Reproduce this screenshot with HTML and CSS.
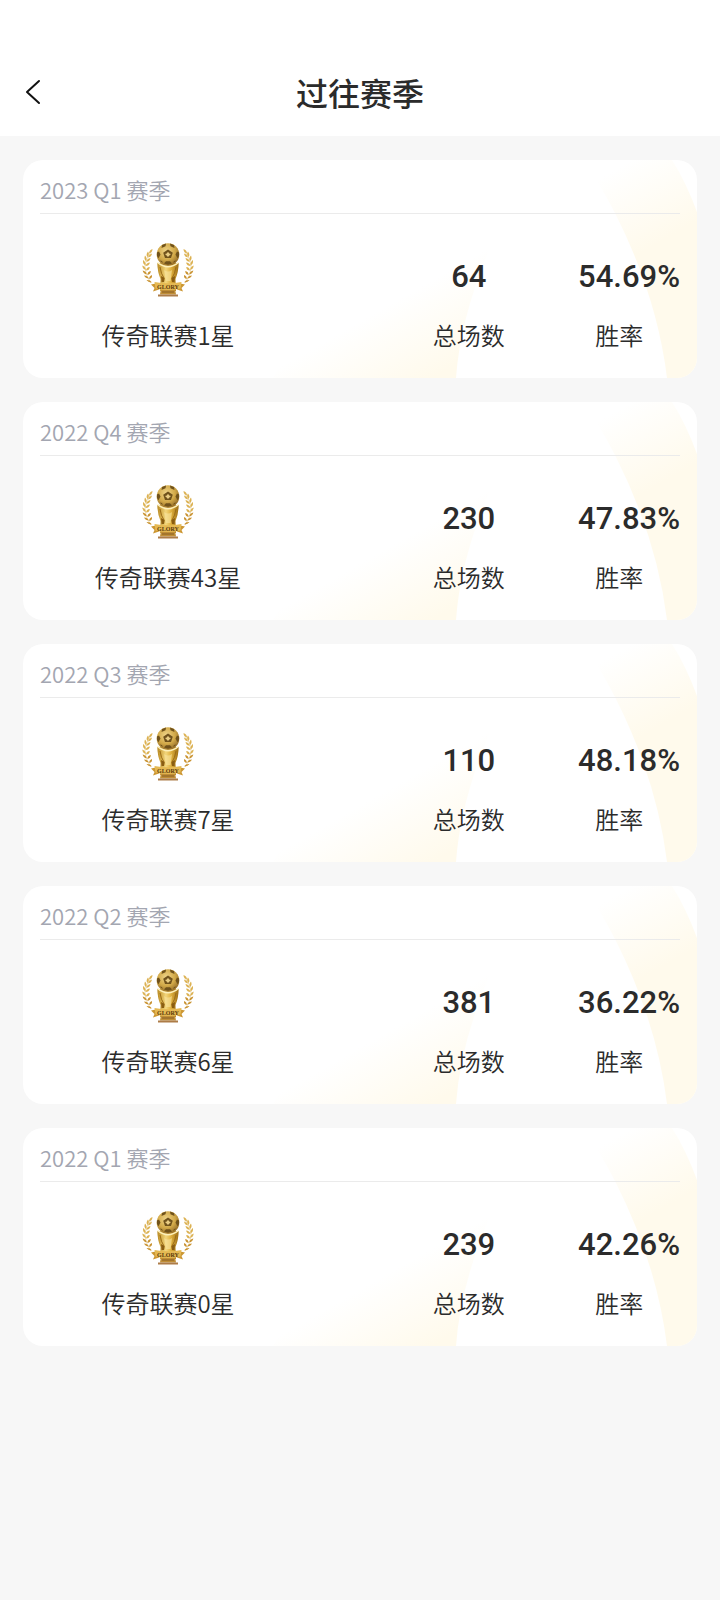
FILE: index.html
```html
<!DOCTYPE html>
<html lang="zh-CN">
<head>
    <meta charset="UTF-8">
    <meta name="viewport" content="width=device-width, initial-scale=1.0">
    <title>过往赛季</title>
    <link rel="stylesheet" href="styles.css">
</head>
<body>

    <!-- Shared drawings -->
    <svg class="defs" aria-hidden="true">
        <defs>
            <linearGradient id="gold" x1="0" y1="0" x2="1" y2="0">
                <stop offset="0" stop-color="#b98a22"/>
                <stop offset="0.4" stop-color="#f3d67c"/>
                <stop offset="0.65" stop-color="#dfb03e"/>
                <stop offset="1" stop-color="#9c6d14"/>
            </linearGradient>
            <radialGradient id="ballGold" cx="0.42" cy="0.35" r="0.65">
                <stop offset="0" stop-color="#efd488"/>
                <stop offset="0.6" stop-color="#d2a948"/>
                <stop offset="1" stop-color="#98702a"/>
            </radialGradient>
            <linearGradient id="fadeLeft" gradientUnits="userSpaceOnUse" x1="364" y1="146" x2="406" y2="220">
                <stop offset="0" stop-color="#fffaec" stop-opacity="0"/>
                <stop offset="1" stop-color="#fffaec"/>
            </linearGradient>
            <linearGradient id="fadeRight" gradientUnits="userSpaceOnUse" x1="602" y1="4" x2="644" y2="78">
                <stop offset="0" stop-color="#fffaec" stop-opacity="0"/>
                <stop offset="1" stop-color="#fffaec"/>
            </linearGradient>

            <symbol id="waves" viewBox="0 0 674 218" preserveAspectRatio="none">
                <path fill="url(#fadeLeft)" d="M250 218 L330 90 L466 90 Q437 160 433 218 Z"/>
                <path fill="url(#fadeRight)" d="M560 0 H649 Q663 22 674 52 V218 H644 Q634 136 592 53 Q576 22 560 0 Z"/>
            </symbol>

            <g id="laurel" fill="#dcb253">
                <path d="M9 9 Q-3 23 8.500 39.500" fill="none" stroke="#e3c685" stroke-width="0.6"/>
                <path d="M10.500 6 Q7 7 7 10.500 Q10.500 9.500 10.500 6Z"/>
                <path d="M6 8.500 Q3.500 11.500 5.500 14 Q8 11 6 8.500Z"/>
                <path d="M10 10.500 Q6.500 11.500 6 14.500 Q9.500 14 10 10.500Z"/>
                <path d="M3 12.500 Q1.500 16 4 18 Q5.500 15 3 12.500Z"/>
                <path d="M8.500 15 Q5 15.500 4.200 18.800 Q8 18.500 8.500 15Z"/>
                <path d="M1 17 Q.5 21 3.500 22.500 Q4 19 1 17Z"/>
                <path d="M8 19.500 Q4.500 19.500 3.500 23 Q7 23 8 19.500Z"/>
                <path d="M.3 22.500 Q.5 26 3.800 27 Q3.600 23.500 .3 22.500Z"/>
                <path d="M7.800 24 Q4.500 24 4 27.500 Q7.500 27.500 7.800 24Z"/>
                <path d="M.6 27.500 Q1.500 31 4.800 31.300 Q4 28 .6 27.500Z" fill="#c99332"/>
                <path d="M8.800 28 Q5.500 28.500 5.300 32 Q8.800 31.500 8.800 28Z" fill="#c99332"/>
                <path d="M2 32.500 Q3.500 35.500 6.800 35.500 Q5.500 32.500 2 32.500Z" fill="#c99332"/>
                <path d="M10 32 Q7 33 7.200 36 Q10.500 35.500 10 32Z" fill="#c99332"/>
                <path d="M4.500 37 Q6.500 39.800 9.800 39.300 Q8 36.500 4.500 37Z" fill="#c99332"/>
            </g>

            <symbol id="trophy" viewBox="0 0 52 54">
                <use href="#laurel"/>
                <use href="#laurel" transform="translate(52 0) scale(-1 1)"/>
                <!-- cup -->
                <path fill="url(#gold)" d="M15.300 20 Q15.500 29 18.500 36 L18 48 H34 L33.500 36 Q36.500 29 36.700 20 Z"/>
                <path fill="none" stroke="#9a6b17" stroke-width="1" d="M18 24 Q19 31 22 35 L21.500 39 M34 24 Q33 31 30 35 L30.500 39"/>
                <path fill="#8a5d12" d="M19 33 L22.500 35 L22 39 H19.500 Z M33 33 L29.500 35 L30 39 H32.500 Z"/>
                <path fill="#f8e4a0" d="M22 27 Q26 30 30 27 L28.500 38 H24 Z" opacity="0.6"/>
                <!-- ball -->
                <circle cx="26" cy="11.500" r="11.300" fill="url(#ballGold)"/>
                <g fill="#70521b">
                    <path d="M26 6.500 L30.800 9.800 L29 15 H23 L21.200 9.800 Z"/>
                    <path d="M20 2 L24 .5 L23.500 3.200 L19.500 5 Z"/>
                    <path d="M32 2 L28 .5 L28.500 3.200 L32.500 5 Z"/>
                    <path d="M14.900 9.500 L17 8.500 L18.500 11.500 L16.500 15.200 L15 13 Z"/>
                    <path d="M37.100 9.500 L35 8.500 L33.500 11.500 L35.500 15.200 L37 13 Z"/>
                    <path d="M22 20.500 L24 18.300 H28 L30 20.500 L26 21.800 Z"/>
                    <path d="M17.500 17.500 L20 18 L20.800 20 Z M34.500 17.500 L32 18 L31.200 20 Z"/>
                </g>
                <path fill="#e9cd84" d="M26 8.800 L27.200 10.600 L29 11 L27.400 12.400 L26 14 L24.600 12.400 L23 11 L24.800 10.600 Z"/>
                <path fill="none" stroke="#fdf0bb" stroke-width="1.600" d="M15.500 19.500 Q26 28 36.500 19.500"/>
                <!-- base -->
                <path fill="#c08e36" d="M19 46 H33 L34 51.500 H18 Z"/>
                <path stroke="#865c25" stroke-width="1" d="M20 49 H32"/>
                <path fill="#ad7c48" d="M16 51.500 H36 V53.500 H16 Z"/>
                <!-- ribbon -->
                <path fill="#cc9733" d="M9 41.500 L16 40 L17 46.500 L11 48.500 L12.500 45 Z M43 41.500 L36 40 L35 46.500 L41 48.500 L39.500 45 Z"/>
                <path fill="#e5b953" d="M12.500 39 Q26 41.500 39.500 39 L38.500 45.500 Q26 48.500 13.500 45.500 Z"/>
                <text class="ribbon-text" x="26" y="45.500" text-anchor="middle">GLORY</text>
            </symbol>
        </defs>
    </svg>

    <header class="header">
        <button class="back" type="button" aria-label="返回">
            <svg width="16" height="26" viewBox="0 0 16 26" aria-hidden="true">
                <path d="M14 2 L2 13 L14 24" fill="none" stroke="#111" stroke-width="2" stroke-linecap="round" stroke-linejoin="round"/>
            </svg>
        </button>
        <h1 class="title">过往赛季</h1>
    </header>

    <main class="seasons">
        <section class="card">
            <svg class="card-bg" aria-hidden="true"><use href="#waves"/></svg>
            <h2 class="season">2023 Q1 赛季</h2>
            <div class="stats">
                <div class="stat rank">
                    <svg class="trophy" aria-hidden="true"><use href="#trophy"/></svg>
                    <span class="label">传奇联赛1星</span>
                </div>
                <div class="stat total">
                    <span class="value">64</span>
                    <span class="label">总场数</span>
                </div>
                <div class="stat rate">
                    <span class="value">54.69%</span>
                    <span class="label">胜率</span>
                </div>
            </div>
        </section>

        <section class="card">
            <svg class="card-bg" aria-hidden="true"><use href="#waves"/></svg>
            <h2 class="season">2022 Q4 赛季</h2>
            <div class="stats">
                <div class="stat rank">
                    <svg class="trophy" aria-hidden="true"><use href="#trophy"/></svg>
                    <span class="label">传奇联赛43星</span>
                </div>
                <div class="stat total">
                    <span class="value">230</span>
                    <span class="label">总场数</span>
                </div>
                <div class="stat rate">
                    <span class="value">47.83%</span>
                    <span class="label">胜率</span>
                </div>
            </div>
        </section>

        <section class="card">
            <svg class="card-bg" aria-hidden="true"><use href="#waves"/></svg>
            <h2 class="season">2022 Q3 赛季</h2>
            <div class="stats">
                <div class="stat rank">
                    <svg class="trophy" aria-hidden="true"><use href="#trophy"/></svg>
                    <span class="label">传奇联赛7星</span>
                </div>
                <div class="stat total">
                    <span class="value">110</span>
                    <span class="label">总场数</span>
                </div>
                <div class="stat rate">
                    <span class="value">48.18%</span>
                    <span class="label">胜率</span>
                </div>
            </div>
        </section>

        <section class="card">
            <svg class="card-bg" aria-hidden="true"><use href="#waves"/></svg>
            <h2 class="season">2022 Q2 赛季</h2>
            <div class="stats">
                <div class="stat rank">
                    <svg class="trophy" aria-hidden="true"><use href="#trophy"/></svg>
                    <span class="label">传奇联赛6星</span>
                </div>
                <div class="stat total">
                    <span class="value">381</span>
                    <span class="label">总场数</span>
                </div>
                <div class="stat rate">
                    <span class="value">36.22%</span>
                    <span class="label">胜率</span>
                </div>
            </div>
        </section>

        <section class="card">
            <svg class="card-bg" aria-hidden="true"><use href="#waves"/></svg>
            <h2 class="season">2022 Q1 赛季</h2>
            <div class="stats">
                <div class="stat rank">
                    <svg class="trophy" aria-hidden="true"><use href="#trophy"/></svg>
                    <span class="label">传奇联赛0星</span>
                </div>
                <div class="stat total">
                    <span class="value">239</span>
                    <span class="label">总场数</span>
                </div>
                <div class="stat rate">
                    <span class="value">42.26%</span>
                    <span class="label">胜率</span>
                </div>
            </div>
        </section>
    </main>

</body>
</html>
```
FILE: styles.css
```css
* {
    box-sizing: border-box;
}

body {
    margin: 0;
    background: #f7f7f7;
    color: #2b2b2b;
    font-family: "Noto Sans CJK SC", sans-serif;
}

.defs {
    display: block;
    width: 0;
    height: 0;
}

/* Top bar, the upper part stays free for the status bar */
.header {
    display: grid;
    grid-template-columns: 64px 1fr 64px;
    align-items: center;
    padding: 52px 0 4px;
    background: #fff;
}

.back {
    display: flex;
    align-items: center;
    height: 80px;
    padding: 0 0 0 25px;
    border: 0;
    background: none;
    cursor: pointer;
}

.title {
    margin: 0;
    font-size: 32px;
    line-height: 48px;
    font-weight: 500;
    text-align: center;
}

/* Season cards */
.seasons {
    display: flex;
    flex-direction: column;
    gap: 24px;
    padding: 24px 23px;
}

.card {
    position: relative;
    padding: 0 17px 25px;
    border-radius: 20px;
    background: #fff;
    overflow: hidden;
}

/* Pale gold waves behind the card content */
.card-bg {
    position: absolute;
    inset: 0;
    width: 100%;
    height: 100%;
}

.season {
    position: relative;
    margin: 0;
    padding: 13px 0 8px;
    border-bottom: 1px solid #ebebeb;
    color: #a3a6b1;
    font-size: 22px;
    line-height: 32px;
    font-weight: 350;
}

.stats {
    position: relative;
    display: flex;
    align-items: flex-end;
    padding-top: 29px;
}

.stat {
    display: flex;
    flex-direction: column;
    align-items: center;
    gap: 20px;
}

.rank {
    width: 40%;
}

.total {
    width: 28%;
    margin-left: auto;
}

.rate {
    width: 19%;
}

.trophy {
    width: 52px;
    height: 54px;
}

.ribbon-text {
    font-family: "Liberation Serif", serif;
    font-size: 6px;
    font-weight: bold;
    fill: #59380a;
}

.value {
    font-family: Roboto, sans-serif;
    font-size: 31px;
    line-height: 40px;
    font-weight: 500;
}

/* Percentages sit on the right edge of the card content */
.rate .value {
    align-self: flex-end;
}

.label {
    font-size: 24px;
    line-height: 36px;
    font-weight: 350;
    white-space: nowrap;
}
```
